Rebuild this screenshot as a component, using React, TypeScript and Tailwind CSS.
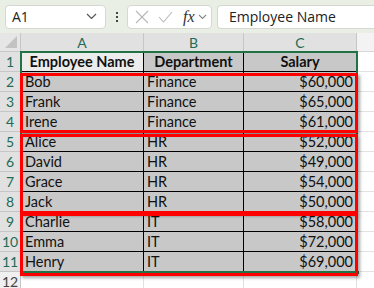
import React from "react";

type Row = { name: string; dept: string; salary: string };

const rows: Row[] = [
  { name: "Bob", dept: "Finance", salary: "$60,000" },
  { name: "Frank", dept: "Finance", salary: "$65,000" },
  { name: "Irene", dept: "Finance", salary: "$61,000" },
  { name: "Alice", dept: "HR", salary: "$52,000" },
  { name: "David", dept: "HR", salary: "$49,000" },
  { name: "Grace", dept: "HR", salary: "$54,000" },
  { name: "Jack", dept: "HR", salary: "$50,000" },
  { name: "Charlie", dept: "IT", salary: "$58,000" },
  { name: "Emma", dept: "IT", salary: "$72,000" },
  { name: "Henry", dept: "IT", salary: "$69,000" },
];

function Chevron() {
  return (
    <svg width="11" height="7" viewBox="0 0 11 7" fill="none">
      <path d="M1 1l4.5 4.5L10 1" stroke="#555" strokeWidth="1.2" />
    </svg>
  );
}

function Toolbar() {
  return (
    <div className="flex h-[33px] items-center bg-[#e9efe5] pl-[5px] font-['Open_Sans',sans-serif]">
      <div className="flex h-[24px] w-[101px] items-center justify-between rounded-[4px] border border-[#d4d8d0] bg-white pl-[6px] pr-[8px]">
        <span className="text-[14px] text-[#222]">A1</span>
        <Chevron />
      </div>
      <div className="flex w-[21px] flex-col items-center gap-[2px]">
        <span className="h-[2px] w-[2px] bg-[#444]" />
        <span className="h-[2px] w-[2px] bg-[#444]" />
        <span className="h-[2px] w-[2px] bg-[#444]" />
      </div>
      <div className="flex h-[24px] w-[85px] items-center rounded-[4px] border border-[#d4d8d0] bg-white pl-[6px]">
        <svg width="14" height="14" viewBox="0 0 14 14" className="ml-[1px]">
          <path d="M1 1l12 12M13 1L1 13" stroke="#b8b8b8" strokeWidth="1.1" />
        </svg>
        <svg width="15" height="12" viewBox="0 0 15 12" className="ml-[9px]">
          <path d="M1 6l4.5 5L14 1" stroke="#b8b8b8" strokeWidth="1.1" fill="none" />
        </svg>
        <span className="ml-[10px] font-['Liberation_Serif',serif] text-[16px] italic leading-none text-[#333]">
          fx
        </span>
        <span className="ml-[3px]">
          <svg width="9" height="6" viewBox="0 0 9 6" fill="none">
            <path d="M1 1l3.5 3.5L8 1" stroke="#888" strokeWidth="1.1" />
          </svg>
        </span>
      </div>
      <div className="ml-[5px] flex h-[24px] flex-1 items-center rounded-l-[4px] border border-r-0 border-[#d4d8d0] bg-white pl-[11px]">
        <span className="text-[14px] text-[#222]">Employee Name</span>
      </div>
    </div>
  );
}

function Sheet() {
  const cell = "h-[20px] border-r border-b border-black bg-[#c8c8c8] text-[14.5px] leading-[19px] text-[#111] overflow-hidden whitespace-nowrap";
  const rowHead = "h-[20px] border-b border-r border-[#c6c6c6] bg-[#e1e1e1] text-center text-[14px] leading-[20px] text-[#1d6b58]";
  return (
    <div className="relative font-['Lato',sans-serif]">
      <div className="grid grid-cols-[21px_123px_100px_113px_1fr]">
        <div className="relative h-[19px] border-b border-r border-[#c6c6c6] bg-[#e6e6e6]">
          <div className="absolute bottom-[3px] right-[3px] h-0 w-0 border-b-[12px] border-l-[12px] border-b-[#c2c2c2] border-l-transparent" />
        </div>
        {["A", "B", "C"].map((c) => (
          <div
            key={c}
            className="h-[19px] border-b border-r border-[#c6c6c6] bg-[#e1e1e1] text-center text-[14px] leading-[19px] text-[#1d6b58]"
          >
            {c}
          </div>
        ))}
        <div className="h-[19px] border-b border-[#d8d8d8] bg-[#f3f3f3]" />

        <div className={rowHead}>1</div>
        <div className={`${cell} bg-[#ececec] text-center font-bold`}>Employee Name</div>
        <div className={`${cell} bg-[#b6b6b6] text-center font-bold`}>Department</div>
        <div className={`${cell} bg-[#b6b6b6] text-center font-bold`}>Salary</div>
        <div className="h-[20px] border-b border-[#e2e2e2] bg-white" />

        {rows.map((r, i) => (
          <React.Fragment key={r.name}>
            <div className={rowHead}>{i + 2}</div>
            <div className={`${cell} pl-[4px]`}>{r.name}</div>
            <div className={`${cell} pl-[3px]`}>{r.dept}</div>
            <div className={`${cell} pr-[3px] text-right`}>{r.salary}</div>
            <div className="h-[20px] border-b border-[#e2e2e2] bg-white" />
          </React.Fragment>
        ))}

        <div className="h-[20px] border-r border-[#c6c6c6] bg-[#f0f0f0] text-center text-[14px] leading-[20px] text-[#444]">
          12
        </div>
        <div className="h-[20px] border-r border-[#e2e2e2] bg-white" />
        <div className="h-[20px] border-r border-[#e2e2e2] bg-white" />
        <div className="h-[20px] border-r border-[#e2e2e2] bg-white" />
        <div className="h-[20px] bg-white" />
      </div>

      {/* selection range */}
      <div className="pointer-events-none absolute left-[20px] top-[18px] h-[222px] w-[338px] border-2 border-[#217346]" />
      <div className="pointer-events-none absolute left-[355px] top-[237px] h-[5px] w-[5px] border border-white bg-[#217346]" />

      {/* group boxes */}
      <div className="pointer-events-none absolute left-[20px] top-[40px] h-[60px] w-[338px] border-[3px] border-[#ff0000] shadow-[2px_2px_3px_rgba(0,0,0,0.35)]" />
      <div className="pointer-events-none absolute left-[20px] top-[101px] h-[80px] w-[338px] border-[3px] border-[#ff0000] shadow-[2px_2px_3px_rgba(0,0,0,0.35)]" />
      <div className="pointer-events-none absolute left-[20px] top-[180px] h-[63px] w-[338px] border-[3px] border-[#ff0000] shadow-[2px_2px_3px_rgba(0,0,0,0.35)]" />
    </div>
  );
}

export default function App() {
  return (
    <div className="h-[288px] w-[374px] overflow-hidden bg-white">
      <Toolbar />
      <Sheet />
    </div>
  );
}
